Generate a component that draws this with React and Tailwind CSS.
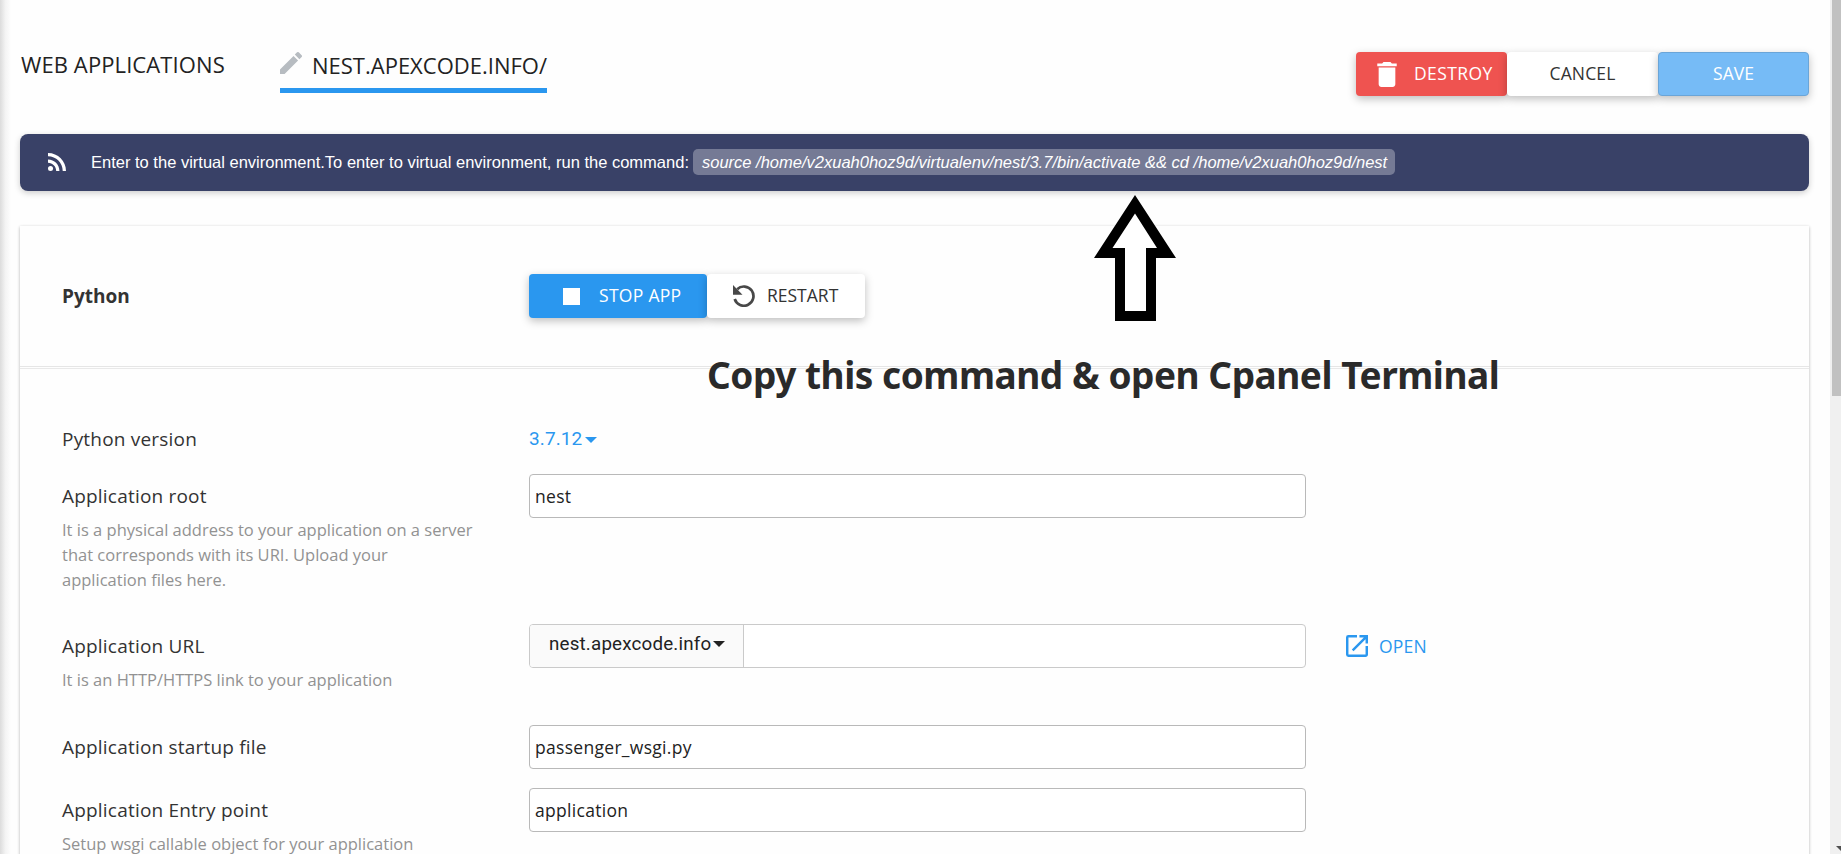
import React from "react";

function Trash() {
  return <svg viewBox="5 3 14 18" className="block h-[25px] w-[20px] fill-white"><path d="M6 19c0 1.1.9 2 2 2h8c1.1 0 2-.9 2-2V7H6v12zM19 4h-3.5l-1-1h-5l-1 1H5v2h14V4z" /></svg>;
}
function Pencil() {
  return <svg viewBox="3 3 18 18" className="block size-[22px] fill-[#b7bcc1]"><path d="M3 17.25V21h3.75L17.81 9.94l-3.75-3.75L3 17.25zM20.71 7.04a1 1 0 0 0 0-1.41l-2.34-2.34a1 1 0 0 0-1.41 0l-1.83 1.83 3.75 3.75 1.83-1.83z" /></svg>;
}
function Rss() {
  return <svg viewBox="4 4.44 15.56 15.56" className="-mt-px block size-[18px] shrink-0 fill-white"><circle cx="6.18" cy="17.82" r="2.18" /><path d="M4 4.44v2.83c7.03 0 12.73 5.7 12.73 12.73h2.83c0-8.59-6.97-15.56-15.56-15.56zm0 5.66v2.83c3.9 0 7.07 3.17 7.07 7.07h2.83c0-5.47-4.43-9.9-9.9-9.9z" /></svg>;
}
function Restart() {
  return <svg viewBox="0 0 22 22" className="block size-[22px]"><path d="M4.2 4.2A9.6 9.6 0 1 1 1.7 14" fill="none" stroke="#484848" strokeWidth="2.7" /><path d="M0 0v9.8h9.5z" fill="#484848" /></svg>;
}
function OpenIcon() {
  return <svg viewBox="3 3 18 18" className="block size-[22px] fill-[#2a97ef]"><path d="M19 19H5V5h7V3H5a2 2 0 0 0-2 2v14a2 2 0 0 0 2 2h14c1.1 0 2-.9 2-2v-7h-2v7zM14 3v2h3.59l-9.83 9.83 1.41 1.41L19 6.41V10h2V3h-7z" /></svg>;
}

const shadow = "shadow-[0_3px_8px_rgba(0,0,0,0.25)]";

function Label({ title, note }) {
  return (
    <div className="w-[467px] shrink-0">
      <div className="pt-[8px] text-[19px] leading-[28px] tracking-[0.2px]">{title}</div>
      {note && <div className="mt-[7px] w-[420px] whitespace-nowrap text-[16.5px] leading-[25px] text-[#929292]">{note}</div>}
    </div>
  );
}

function Field({ value }) {
  return <div className="flex h-[44px] w-[777px] items-center rounded-[4px] border border-[#b9b9b9] bg-white pl-[5px] text-[17.5px] tracking-[0.3px] text-[#222]">{value}</div>;
}

export default function App() {
  return (
    <div className="relative flex h-[854px] w-[1841px] overflow-hidden bg-[#fefefe] font-['Open_Sans','Noto_Sans',sans-serif] text-[#333]">
      <div className="h-full w-[11px] shrink-0 bg-linear-to-r from-[#dcdcdc] via-[#f4f4f4] to-[#fefefe]" />
      <main className="w-[1819px] shrink-0 pl-[9px] pr-[21px]">
        <header className="flex h-[134px] justify-between pt-[52px]">
          <div className="flex text-[22px] leading-[30px] text-[#222]">
            <div className="-mt-[3px] w-[260px] whitespace-nowrap pl-px tracking-[0.1px]">WEB APPLICATIONS</div>
            <div className="flex h-[41px] w-[267px] border-b-[5px] border-[#2a97ef]">
              <Pencil />
              <div className="-mt-[2px] ml-[10px] whitespace-nowrap">NEST.APEXCODE.INFO/</div>
            </div>
          </div>
          <div className="flex text-[17.5px] leading-[42px]">
            <div className={`flex h-[44px] w-[151px] items-center rounded-[4px] bg-[#ef5350] pl-[21px] text-white ${shadow}`}><Trash /><span className="-mt-[2px] ml-[17px] tracking-[0.4px]">DESTROY</span></div>
            <div className={`h-[44px] w-[151px] rounded-[4px] bg-white text-center tracking-[0.15px] ${shadow}`}>CANCEL</div>
            <div className={`h-[44px] w-[151px] rounded-[4px] border border-[#6aa5d8] bg-[#76bbf6] text-center leading-[40px] text-white ${shadow}`}>SAVE</div>
          </div>
        </header>

        <div className="flex h-[57px] items-center rounded-[8px] bg-[#394167] pl-[28px] font-['Liberation_Sans',Arial,sans-serif] text-[16.5px] text-white shadow-[0_2px_6px_rgba(0,0,0,0.2)]">
          <Rss />
          <span className="ml-[25px] w-[602px] whitespace-nowrap">Enter to the virtual environment.To enter to virtual environment, run the command:</span>
          <span className="-mt-px h-[26px] w-[702px] whitespace-nowrap rounded-[5px] bg-[#757a95] pl-[9px] italic leading-[26px]">source /home/v2xuah0hoz9d/virtualenv/nest/3.7/bin/activate &amp;&amp; cd /home/v2xuah0hoz9d/nest</span>
        </div>

        <section className="mt-[35px] h-[700px] bg-[#fefefe] shadow-[0_1px_3px_rgba(0,0,0,0.3)]">
          <div className="flex h-[141px] items-center border-b border-[#e6e6e6] pl-[42px]">
            <div className="mt-px w-[467px] text-[19px] font-bold">Python</div>
            <div className="flex text-[17.5px]">
              <div className={`flex h-[44px] w-[178px] items-center rounded-[4px] bg-[#2a97ef] pl-[34px] text-white ${shadow}`}><span className="size-[17px] bg-white" /><span className="-mt-[2px] ml-[19px] tracking-[0.3px]">STOP APP</span></div>
              <div className={`flex h-[44px] w-[158px] items-center rounded-[4px] bg-white pl-[26px] ${shadow}`}><Restart /><span className="-mt-[2px] ml-[12px]">RESTART</span></div>
            </div>
          </div>
          <div className="mt-px border-t border-[#e9e9e9] pl-[42px] pt-[48px]">
            <div className="flex h-[57px]">
              <Label title="Python version" />
              <div className="flex h-[44px] items-center font-['Roboto',sans-serif] text-[19px] tracking-[0.1px] text-[#2a97ef]">3.7.12<span className="ml-[3px] mt-px border-x-[6px] border-t-[6px] border-x-transparent border-t-[#2a97ef]" /></div>
            </div>
            <div className="flex h-[150px]">
              <Label title="Application root" note={<>It is a physical address to your application on a server<br />that corresponds with its URI. Upload your<br />application files here.</>} />
              <Field value="nest" />
            </div>
            <div className="flex h-[101px]">
              <Label title="Application URL" note="It is an HTTP/HTTPS link to your application" />
              <div className="flex h-[44px] w-[777px] rounded-[4px] border border-[#cacaca] bg-white">
                <div className="flex w-[214px] items-center rounded-l-[3px] border-r border-[#cacaca] bg-[#fafafa] pb-[4px] pl-[19px] font-['Roboto',sans-serif] text-[18.75px] tracking-[0.19px] text-[#222]">nest.apexcode.info<span className="ml-[2px] border-x-[6px] border-t-[6px] border-x-transparent border-t-[#222]" /></div>
              </div>
              <div className="ml-[40px] flex h-[44px] items-center text-[17.5px] tracking-[0.2px] text-[#2a97ef]"><OpenIcon /><span className="ml-[11px]">OPEN</span></div>
            </div>
            <div className="flex h-[63px]">
              <Label title="Application startup file" />
              <Field value="passenger_wsgi.py" />
            </div>
            <div className="flex">
              <Label title="Application Entry point" note="Setup wsgi callable object for your application" />
              <Field value="application" />
            </div>
          </div>
        </section>
      </main>
      <div className="flex h-full w-[11px] shrink-0 flex-col justify-between overflow-hidden bg-[#f0f0f0] pb-[3px]">
        <div className="ml-[2px] h-[396px] bg-[#c1c1c1]" />
        <div className="ml-[6px] w-0 border-x-[5px] border-t-[5px] border-x-transparent border-t-[#505050]" />
      </div>

      <svg viewBox="0 0 82 126" className="absolute left-[1094px] top-[195px] h-[126px] w-[82px]"><path d="M41 0 82 63H62V126H21V63H0z" /><path d="M41 18.5 63 53H52V116H31V53H18.5z" fill="#fff" /></svg>
      <div className="absolute left-[707px] top-[350px] whitespace-nowrap font-['Noto_Sans',sans-serif] text-[37px] font-bold leading-[50px] tracking-[-0.46px] text-[#2a2a2a]">Copy this command &amp; open Cpanel Terminal</div>
    </div>
  );
}
